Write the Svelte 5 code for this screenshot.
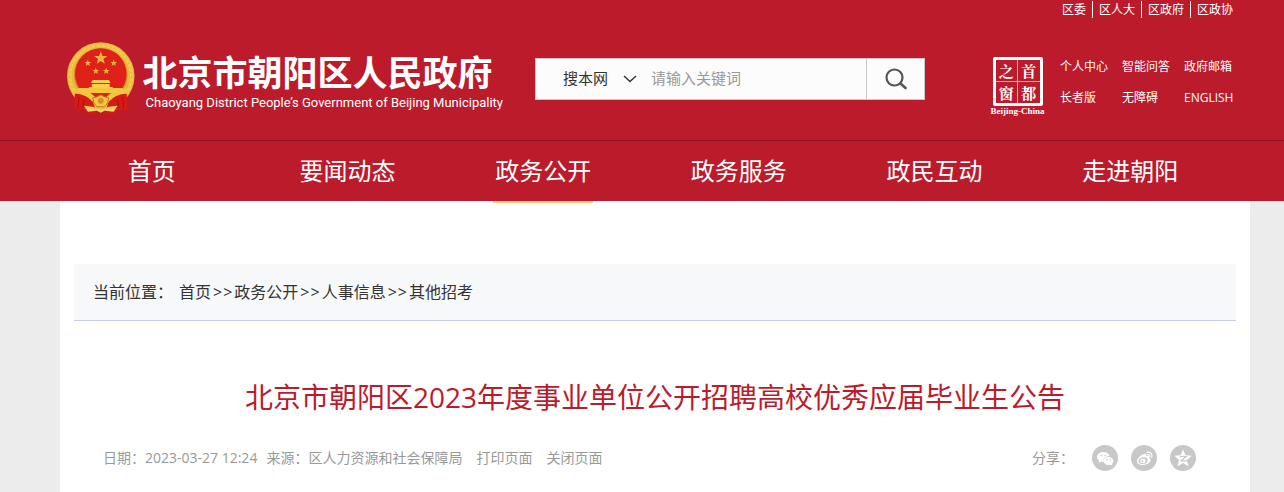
<script lang="ts">
  interface Option {
    value: string;
    label: string;
  }

  const topLinks = ['区委', '区人大', '区政府', '区政协'];
  const tools = ['个人中心', '智能问答', '政府邮箱', '长者版', '无障碍', 'ENGLISH'];
  const nav = ['首页', '要闻动态', '政务公开', '政务服务', '政民互动', '走进朝阳'];
  const crumbs = ['首页', '政务公开', '人事信息', '其他招考'];
  const scopes: Option[] = [
    { value: 'site', label: '搜本网' }
  ];

  let active = $state('政务公开');
  let scope = $state('site');
  let keyword = $state('');

  function handleSubmit(event: SubmitEvent) {
    event.preventDefault();
  }
</script>

{#snippet star(x: number, y: number, size: number)}
  <path
    transform="translate({x} {y}) scale({size})"
    d="M0-10 2.4-3.2 9.5-3.1 3.8 1.2 5.9 8.1 0 4-5.9 8.1-3.8 1.2-9.5-3.1-2.4-3.2Z"
    fill="#e9b93c"
  />
{/snippet}

<div class="page">
  <header>
    <div class="top-links">
      {#each topLinks as item}
        <a href="#top">{item}</a>
      {/each}
    </div>

    <div class="banner">
      <a class="brand" href="#home">
        <svg class="emblem" viewBox="0 0 70 74" aria-hidden="true">
          <circle cx="35" cy="34" r="34" fill="#e9b93a" />
          <circle cx="35" cy="34" r="31" fill="none" stroke="#f3cb52" stroke-width="3" />
          <circle cx="35" cy="34" r="31" fill="none" stroke="#dfa930" stroke-width="1" stroke-dasharray="2 3" />
          <circle cx="35" cy="33" r="27" fill="#cf9527" />
          <circle cx="35" cy="32" r="26" fill="#e0211a" />
          {@render star(35, 16, 0.7)}
          {@render star(22, 21, 0.36)}
          {@render star(48, 21, 0.36)}
          {@render star(30, 29, 0.36)}
          {@render star(40.5, 29, 0.36)}
          <path d="M27 38h16l2 3H25ZM26 42h18v3h3v2H23v-2h3Z" fill="#f8cf4a" />
          <path d="M12 46h46l-3 5H15Z" fill="#f5c83c" />
          <path d="M9 51 8 65l3 4 7-1 3 4 10-1-4-11-9-8ZM61 51l1 14-3 4-7-1-3 4-10-1 4-11 9-8Z" fill="#d81a14" />
          <path d="M13 55l-1 12M18 58l-1 8M57 55l1 12M52 58l1 8" stroke="#a81017" />
          <path d="M9 49q13 1 20 9M61 49q-13 1-20 9" fill="none" stroke="#f2c545" stroke-width="5" />
          <path d="M35 53 39 55 43 56 42 61 39 65H31L28 61 27 56 31 55Z" fill="#f2c540" stroke="#b9781b" />
          <circle cx="35" cy="59" r="3" fill="#d39222" />
          <path d="m18 64 9 1q8 5 16 0l9-1-4 6-9-1-4 2-4-2-9 1Z" fill="#f7d268" />
        </svg>
        <span class="names">
          <strong>北京市朝阳区人民政府</strong>
          <small>Chaoyang District People’s Government of Beijing Municipality</small>
        </span>
      </a>

      <form class="search" onsubmit={handleSubmit}>
        <div class="scope">
          <select aria-label="搜索范围" bind:value={scope}>
            {#each scopes as item}
              <option value={item.value}>{item.label}</option>
            {/each}
          </select>
          <svg viewBox="0 0 14 8" aria-hidden="true">
            <path d="m1 1 6 5.5L13 1" fill="none" stroke="#333" stroke-width="1.4" />
          </svg>
        </div>
        <input type="text" aria-label="关键词" placeholder="请输入关键词" bind:value={keyword} />
        <button type="submit" aria-label="搜索">
          <svg viewBox="0 0 22 22" aria-hidden="true">
            <circle cx="9.5" cy="9.5" r="8" fill="none" stroke="#555" stroke-width="2.2" />
            <path d="m15.5 15.5 5 4.5" stroke="#555" stroke-width="2.6" stroke-linecap="round" />
          </svg>
        </button>
      </form>

      <div class="side">
        <a class="window" href="#capital">
          <span class="seal">
            <span>之</span><span>首</span>
            <span>窗</span><span>都</span>
          </span>
          <small>Beijing-China</small>
        </a>
        <div class="tools">
          {#each tools as item}
            <a href="#tools">{item}</a>
          {/each}
        </div>
      </div>
    </div>

    <nav>
      {#each nav as item}
        <a href="#nav" class:active={item === active} onclick={() => (active = item)}>{item}</a>
      {/each}
    </nav>
  </header>

  <main>
    <div class="crumbs">
      <span class="here">当前位置：</span>
      {#each crumbs as item, i}
        {#if i > 0}<span class="arrow"><span>&gt;</span><span>&gt;</span></span>{/if}
        <a href="#crumb">{item}</a>
      {/each}
    </div>

    <h1>北京市朝阳区2023年度事业单位公开招聘高校优秀应届毕业生公告</h1>

    <div class="meta">
      <span>日期：2023-03-27 12:24</span>
      <span class="source">来源：区人力资源和社会保障局</span>
      <button type="button" onclick={() => window.print()}>打印页面</button>
      <button type="button" onclick={() => window.close()}>关闭页面</button>

      <div class="share">
        <span>分享：</span>
        <a href="#wechat" aria-label="微信">
          <svg viewBox="0 0 26 26">
            <circle cx="13" cy="13" r="13" fill="#c8c8c8" />
            <path d="M11.500 7C7.800 7 5 9.200 5 12q0 2.300 2.200 3.800L6.600 18l2.500-1.400q1.200.4 2.500.3C10.800 13.400 14 11 17.700 11.300 17 8.800 14.500 7 11.500 7Z" fill="#fff" />
            <path d="M16.500 12c-2.900 0-5 1.700-5 4s2.100 4 5 4l1.900-.3 2 1.100-.5-1.900q1.600-1.200 1.600-2.900c0-2.300-2.200-4-5-4Z" fill="#fff" />
            <g fill="#c8c8c8">
              <circle cx="9.300" cy="10.500" r=".8" /><circle cx="13.300" cy="10.500" r=".8" />
              <circle cx="14.800" cy="14.800" r=".7" /><circle cx="18.200" cy="14.800" r=".7" />
            </g>
          </svg>
        </a>
        <a href="#weibo" aria-label="微博">
          <svg viewBox="0 0 26 26">
            <circle cx="13" cy="13" r="13" fill="#c8c8c8" />
            <path d="M12.500 9.200c1.300-.8 3.300-.9 3 1.700 2-.7 3.500 0 2.600 2 2 .6 1.900 2.600.6 4.200-2.600 3.300-8.900 3.900-11.700 1.400-2.700-2.500.3-7.300 5.500-9.300Z" fill="#fff" />
            <ellipse cx="12.100" cy="15.700" rx="4.600" ry="3.200" fill="#c8c8c8" transform="rotate(-10 12 15.700)" />
            <ellipse cx="11.800" cy="15.900" rx="2.800" ry="2.200" fill="#fff" />
            <circle cx="11.300" cy="16.200" r="1" fill="#c8c8c8" />
            <path d="M16.200 7.300c3.300-.8 5.800 2 4.500 5M16.700 9.600c1.700-.3 2.600.8 2.100 2.300" fill="none" stroke="#fff" stroke-width="1.200" stroke-linecap="round" />
          </svg>
        </a>
        <a href="#qzone" aria-label="QQ空间">
          <svg viewBox="0 0 26 26">
            <circle cx="13" cy="13" r="13" fill="#c8c8c8" />
            <path d="m13 4.500 2.500 5.700 6.200.6-4.700 4.100 1.400 6.300L13 18l-5.400 3.200L9 14.900l-4.700-4.100 6.200-.6Z" fill="#fff" />
            <path d="M9.800 11.700q3.400-.6 6.400 0l-5.300 4q3.500.4 7.100-.1" fill="none" stroke="#c8c8c8" stroke-width="1.300" />
          </svg>
        </a>
      </div>
    </div>
  </main>
</div>

<style>
  :global(body) {
    margin: 0;
    background: #ececec;
  }

  .page {
    display: flex;
    flex-direction: column;
    min-height: 100vh;
    font-family: "Open Sans", "Noto Sans CJK SC", sans-serif;
    font-size: 14px;
    color: #333;
  }

  a {
    color: inherit;
    text-decoration: none;
  }

  svg {
    display: block;
  }

  button,
  input,
  select {
    margin: 0;
    padding: 0;
    border: 0;
    border-radius: 0;
    background: none;
    font: inherit;
    color: inherit;
  }

  button {
    cursor: pointer;
  }

  header {
    background: #bc1b2c;
    color: #fff;
  }

  .top-links {
    display: flex;
    justify-content: flex-end;
    padding: 1px 45px 0 0;
    font-size: 12px;
    line-height: 17px;
  }

  .top-links a {
    padding: 0 6px;
  }

  .top-links a + a {
    border-left: 1px solid #fff;
  }

  .banner {
    display: flex;
    align-items: center;
    height: 122px;
    padding: 0 48px 0 66px;
  }

  .brand {
    display: flex;
    align-items: center;
    gap: 7px;
    width: 437px;
  }

  .emblem {
    width: 70px;
    height: 74px;
  }

  .names {
    display: flex;
    flex-direction: column;
    padding-top: 8px;
    white-space: nowrap;
  }

  .names strong {
    font-size: 35px;
    line-height: 40px;
  }

  .names small {
    padding-left: 3px;
    font-family: Roboto, "Liberation Sans", sans-serif;
    font-size: 13px;
    line-height: 20px;
  }

  .search {
    display: flex;
    box-sizing: border-box;
    width: 390px;
    height: 42px;
    margin-left: 32px;
    border: 1px solid #c9c9c9;
    background: #fcfcfc;
    color: #333;
    font-size: 15px;
  }

  .scope {
    position: relative;
    width: 115px;
  }

  .scope select {
    width: 100%;
    height: 100%;
    padding: 0 0 2px 27px;
    appearance: none;
  }

  .scope svg {
    position: absolute;
    top: 16px;
    right: 14px;
    width: 14px;
    height: 8px;
    pointer-events: none;
  }

  .search input {
    flex: 1;
    min-width: 0;
    padding-bottom: 2px;
  }

  .search input::placeholder {
    color: #999;
    opacity: 1;
  }

  .search button {
    display: grid;
    place-items: center;
    width: 58px;
    border-left: 1px solid #c9c9c9;
  }

  .search button svg {
    width: 22px;
    height: 22px;
  }

  .side {
    display: flex;
    align-items: center;
    gap: 15px;
    margin-left: auto;
  }

  .window {
    display: flex;
    flex-direction: column;
    align-items: center;
    width: 55px;
    margin-top: 14px;
  }

  .seal {
    display: grid;
    grid-template-columns: 1fr 1fr;
    gap: 1px;
    box-sizing: border-box;
    width: 50px;
    height: 49px;
    border: 3px solid #fff;
    border-radius: 2px;
    background: #e8a9af;
    font-family: "Noto Serif CJK SC", "Noto Sans CJK SC", serif;
    font-size: 15px;
    font-weight: 700;
    line-height: 21px;
    text-align: center;
  }

  .seal span {
    background: #bc1b2c;
  }

  .window small {
    font-family: "Liberation Serif", serif;
    font-size: 9px;
    font-weight: 700;
    line-height: 10px;
    white-space: nowrap;
  }

  .tools {
    display: grid;
    grid-template-columns: 48px 48px 52px;
    gap: 15px 14px;
    padding-top: 6px;
    font-size: 12px;
    line-height: 16px;
    white-space: nowrap;
  }

  nav {
    display: grid;
    grid-template-columns: repeat(6, 1fr);
    padding: 0 56px 0 54px;
    border-top: 1px solid #8f1224;
    font-size: 24px;
    line-height: 60px;
    text-align: center;
  }

  nav a {
    position: relative;
  }

  nav a.active::after {
    content: "";
    position: absolute;
    top: 100%;
    left: 50%;
    width: 100px;
    height: 2px;
    margin-left: -50px;
    background: #fdcb7f;
  }

  main {
    flex: 1;
    margin: 0 34px 0 60px;
    padding: 63px 14px 0;
    background: #fff;
  }

  .crumbs {
    display: flex;
    padding: 0 19px;
    border-bottom: 1px solid #c3d1e8;
    background: #f7f8fa;
    font-size: 16px;
    line-height: 56px;
  }

  .here {
    margin-right: 6px;
  }

  .arrow {
    display: flex;
    gap: 1px;
    padding: 0 2px;
  }

  h1 {
    margin: 56px 0 0;
    color: #bc1b2c;
    font-size: 28px;
    font-weight: 400;
    line-height: 40px;
    text-align: center;
  }

  .meta {
    display: flex;
    align-items: center;
    margin-top: 28px;
    padding: 0 40px 0 29px;
    color: #999;
    line-height: 26px;
  }

  .source {
    margin-left: 9px;
  }

  .meta button {
    margin-left: 14px;
  }

  .share {
    display: flex;
    align-items: center;
    gap: 13px;
    margin-left: auto;
  }

  .share span {
    margin-right: 5px;
  }

  .share svg {
    width: 26px;
    height: 26px;
  }
</style>
